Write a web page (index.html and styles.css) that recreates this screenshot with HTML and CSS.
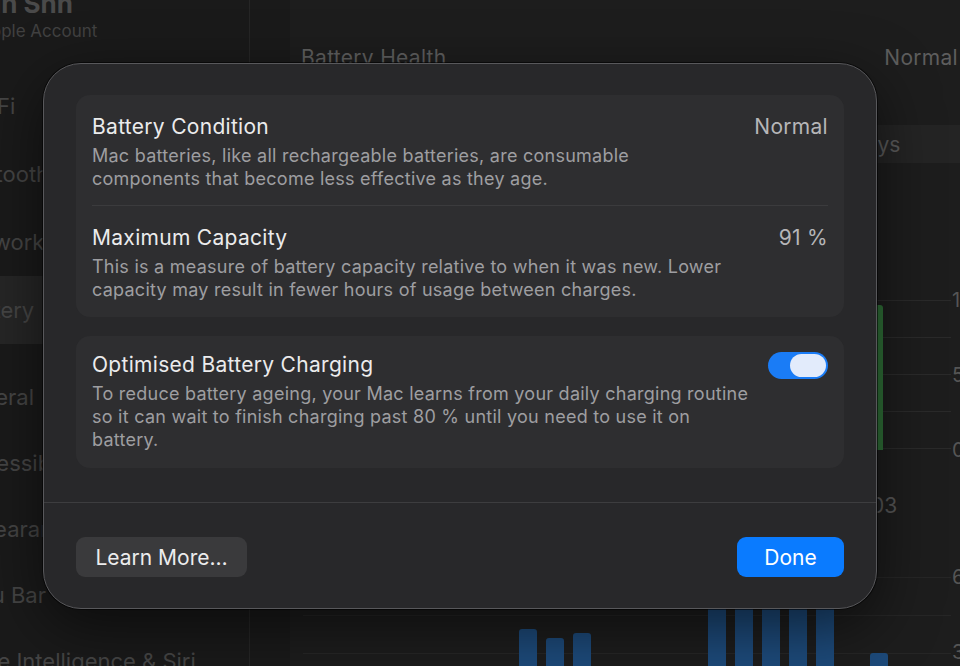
FILE: index.html
```html
<!DOCTYPE html>
<html lang="en">
<head>
<meta charset="utf-8">
<title>Battery Health</title>
<link rel="stylesheet" href="styles.css">
</head>
<body>
<div class="window">
  <aside class="sidebar">
    <div class="account">
      <div class="acct-name">Jin Shh</div>
      <div class="acct-sub">Apple Account</div>
    </div>
    <nav class="nav">
      <div class="nav-item"><span class="nav-label nav-wifi">Wi‑Fi</span></div>
      <div class="nav-item"><span class="nav-label nav-bt">Bluetooth</span></div>
      <div class="nav-item"><span class="nav-label nav-net">Network</span></div>
      <div class="nav-item nav-selected"><span class="nav-label">Battery</span></div>
      <div class="nav-gap"></div>
      <div class="nav-item nav-tight"><span class="nav-label nav-gen">General</span></div>
      <div class="nav-item nav-tight"><span class="nav-label nav-acc">Accessibility</span></div>
      <div class="nav-item nav-tight"><span class="nav-label nav-app">Appearance</span></div>
      <div class="nav-item nav-tight"><span class="nav-label nav-menu">Menu Bar</span></div>
      <div class="nav-item nav-tight"><span class="nav-label nav-ai">Apple Intelligence &amp; Siri</span></div>
    </nav>
  </aside>
  <main class="main">
    <div class="content">
      <div class="health-row">
        <span>Battery Health</span>
        <span>Normal</span>
      </div>
      <div class="segmented">
        <span class="seg">Last 24 Hours</span>
        <span class="seg seg-on">Last 10 Days</span>
      </div>
      <div class="chart chart-level">
        <div class="plot">
          <div class="bar bar-green" style="grid-column: 22; height: 145px"></div>
        </div>
        <div class="axis-y">
          <span>100%</span>
          <span>50%</span>
          <span>0%</span>
        </div>
      </div>
      <div class="axis-x">
        <span>06</span><span>09</span><span>12</span><span>15</span><span>18</span><span>21</span><span>00</span><span>03</span>
      </div>
      <div class="chart chart-usage">
        <div class="plot">
          <div class="bar bar-blue" style="grid-column: 9; height: 99px"></div>
          <div class="bar bar-blue" style="grid-column: 10; height: 90px"></div>
          <div class="bar bar-blue" style="grid-column: 11; height: 95px"></div>
          <div class="bar bar-blue" style="grid-column: 16; height: 140px"></div>
          <div class="bar bar-blue" style="grid-column: 17; height: 148px"></div>
          <div class="bar bar-blue" style="grid-column: 18; height: 144px"></div>
          <div class="bar bar-blue" style="grid-column: 19; height: 150px"></div>
          <div class="bar bar-blue" style="grid-column: 20; height: 142px"></div>
          <div class="bar bar-blue" style="grid-column: 22; height: 75px"></div>
        </div>
        <div class="axis-y">
          <span>60m</span>
          <span>30m</span>
          <span>0m</span>
        </div>
      </div>
    </div>
  </main>
</div>

<div class="sheet" role="dialog" aria-label="Battery Health">
  <div class="sheet-body">
    <section class="card">
      <div class="row row-first">
        <div class="row-text">
          <div class="row-title">Battery Condition</div>
          <div class="row-desc">Mac batteries, like all rechargeable batteries, are consumable<br>components that become less effective as they age.</div>
        </div>
        <div class="row-value">Normal</div>
      </div>
      <div class="sep"></div>
      <div class="row row-second">
        <div class="row-text">
          <div class="row-title">Maximum Capacity</div>
          <div class="row-desc">This is a measure of battery capacity relative to when it was new. Lower<br>capacity may result in fewer hours of usage between charges.</div>
        </div>
        <div class="row-value">91 %</div>
      </div>
    </section>
    <section class="card">
      <div class="row row-toggle">
        <div class="row-text">
          <div class="row-title">Optimised Battery Charging</div>
          <div class="row-desc">To reduce battery ageing, your Mac learns from your daily charging routine<br>so it can wait to finish charging past 80 % until you need to use it on<br>battery.</div>
        </div>
        <div class="toggle" role="switch" aria-checked="true"><span class="knob"></span></div>
      </div>
    </section>
  </div>
  <div class="sheet-footer">
    <button class="btn btn-secondary">Learn More…</button>
    <button class="btn btn-primary">Done</button>
  </div>
</div>
</body>
</html>
```

FILE: styles.css
```css
* { box-sizing: border-box; }

html, body {
  margin: 0;
  padding: 0;
  width: 960px;
  height: 666px;
  overflow: hidden;
  background: #1c1c1c;
  font-family: Inter, "Noto Sans", "Liberation Sans", sans-serif;
}

.window {
  display: flex;
  width: 960px;
  height: 666px;
}

/* ---------- sidebar (background, dimmed) ---------- */
.sidebar {
  width: 250px;
  flex: none;
  background: #1a1a1a;
  border-right: 1px solid #262626;
  overflow: hidden;
}

.account {
  margin-top: -11px;
  margin-left: -21px;
}

.acct-name {
  font-size: 26px;
  line-height: 30px;
  font-weight: 700;
  color: #4a4a4a;
  white-space: nowrap;
}

.acct-sub {
  margin-top: 1px;
  font-size: 17px;
  line-height: 22px;
  color: #414141;
  white-space: nowrap;
}

.nav {
  margin-top: 30px;
}

.nav-item {
  height: 68px;
  display: flex;
  align-items: center;
  margin-right: 10px;
  border-radius: 0 10px 10px 0;
}

.nav-tight {
  height: 66px;
}

.nav-selected {
  background: #262626;
}

.nav-gap {
  height: 20px;
}

.nav-label {
  margin-left: -40px;
  font-size: 22px;
  color: #454545;
  white-space: nowrap;
}

.nav-wifi { margin-left: -38px; }
.nav-bt { margin-left: -50px; }
.nav-net { margin-left: -44px; }
.nav-gen { margin-left: -47px; }
.nav-acc { margin-left: -44px; }
.nav-app { margin-left: -48px; }
.nav-menu { margin-left: -54px; }
.nav-ai { margin-left: -50px; }

/* ---------- main (background, dimmed) ---------- */
.main {
  flex: 1;
  min-width: 0;
  background: #1a1a1a;
  padding-left: 40px;
  overflow: hidden;
}

.content {
  height: 100%;
  width: 690px;
  background: #1d1d1d;
  padding: 36px 0 0 11px;
}

.health-row {
  display: flex;
  justify-content: space-between;
  align-items: center;
  height: 42px;
  padding-right: 22px;
  font-size: 21px;
  letter-spacing: 0.3px;
  color: #5e5e5e;
}

.segmented {
  margin-top: 47px;
  height: 38px;
  width: 700px;
  display: flex;
  background: #242424;
  border-radius: 8px;
}

.seg {
  display: flex;
  align-items: center;
  justify-content: center;
  font-size: 21px;
  color: #5a5a5a;
}

.seg:first-child { width: 400px; }
.seg-on { width: 274px; }

.chart {
  display: flex;
  align-items: stretch;
}

.chart-level {
  margin-top: 137px;
  height: 150px;
}

.plot {
  width: 648px;
  margin-left: 2px;
  display: grid;
  grid-template-columns: repeat(24, 27px);
  align-items: end;
  border-top: 1px solid #2a2a2a;
  background-image: repeating-linear-gradient(to bottom, transparent 0, transparent 36px, #2a2a2a 36px, #2a2a2a 37px);
}

.bar {
  grid-row: 1;
  border-radius: 3px 3px 0 0;
}

.bar-green {
  width: 13px;
  background: #2f6f37;
}

.bar-blue {
  width: 18px;
  background: #1d4a7a;
}

.axis-y {
  display: flex;
  flex-direction: column;
  justify-content: space-between;
  padding-left: 1px;
  margin-top: -12px;
  margin-bottom: -12px;
  font-size: 20px;
  line-height: 24px;
  color: #555;
  white-space: nowrap;
}

.axis-x {
  display: flex;
  height: 30px;
  margin-top: 41px;
  margin-left: 2px;
  font-size: 21px;
  line-height: 30px;
  color: #555;
}

.axis-x span {
  width: 81px;
  flex: none;
  padding-left: 1px;
}

.chart-usage {
  margin-top: 56px;
  height: 150px;
}

.chart-usage .plot {
  border-top: 1px solid #262626;
  background-image: repeating-linear-gradient(to bottom, transparent 0, transparent 37px, #262626 37px, #262626 38px);
}

/* ---------- sheet ---------- */
.sheet {
  position: absolute;
  left: 43px;
  top: 63px;
  width: 834px;
  height: 546px;
  background: #28282a;
  border: 1px solid #58585b;
  border-radius: 38px;
  box-shadow: 0 0 0 1px rgba(0, 0, 0, 0.55), 0 18px 60px rgba(0, 0, 0, 0.55);
  display: flex;
  flex-direction: column;
  color: #e6e6e7;
}

.sheet-body {
  padding: 31px 32px 34px;
  display: flex;
  flex-direction: column;
  gap: 19px;
}

.card {
  background: #2e2e30;
  border-radius: 14px;
}

.row {
  display: flex;
  align-items: flex-start;
  gap: 20px;
  padding: 19px 16px 16px;
}

.row-first {
  padding-top: 20px;
  padding-bottom: 15px;
}

.row-second {
  padding-top: 20px;
}

.row-toggle {
  padding: 17px 16px 17px;
}

.row-text {
  flex: 1;
  min-width: 0;
  display: flex;
  flex-direction: column;
  gap: 5px;
}

.row-title {
  font-size: 21px;
  line-height: 24px;
  letter-spacing: 0.3px;
  color: #ebebec;
  white-space: nowrap;
}

.row-desc {
  font-size: 18px;
  line-height: 23px;
  letter-spacing: 0.25px;
  color: #9e9ea1;
  white-space: nowrap;
}

.row-value {
  font-size: 21px;
  line-height: 24px;
  letter-spacing: 0.3px;
  color: #b6b6b8;
  white-space: nowrap;
}

.sep {
  height: 1px;
  margin: 0 16px;
  background: #3b3b3d;
}

.toggle {
  flex: none;
  margin-top: -1px;
  width: 60px;
  height: 27px;
  border-radius: 14px;
  background: #1a7cf6;
  display: flex;
  align-items: center;
  justify-content: flex-end;
  padding: 2px;
}

.knob {
  width: 36px;
  height: 23px;
  border-radius: 12px;
  background: #e2ebfb;
}

.sheet-footer {
  border-top: 1px solid #3d3d3f;
  padding: 34px 32px 31px;
  display: flex;
  justify-content: space-between;
  align-items: center;
}

.btn {
  height: 40px;
  border: none;
  border-radius: 9px;
  font-family: inherit;
  font-size: 21px;
  color: #ececed;
  padding: 0;
}

.btn-secondary {
  width: 171px;
  background: #3a3a3c;
}

.btn-primary {
  width: 107px;
  background: #0a7bff;
  color: #ffffff;
}
```
